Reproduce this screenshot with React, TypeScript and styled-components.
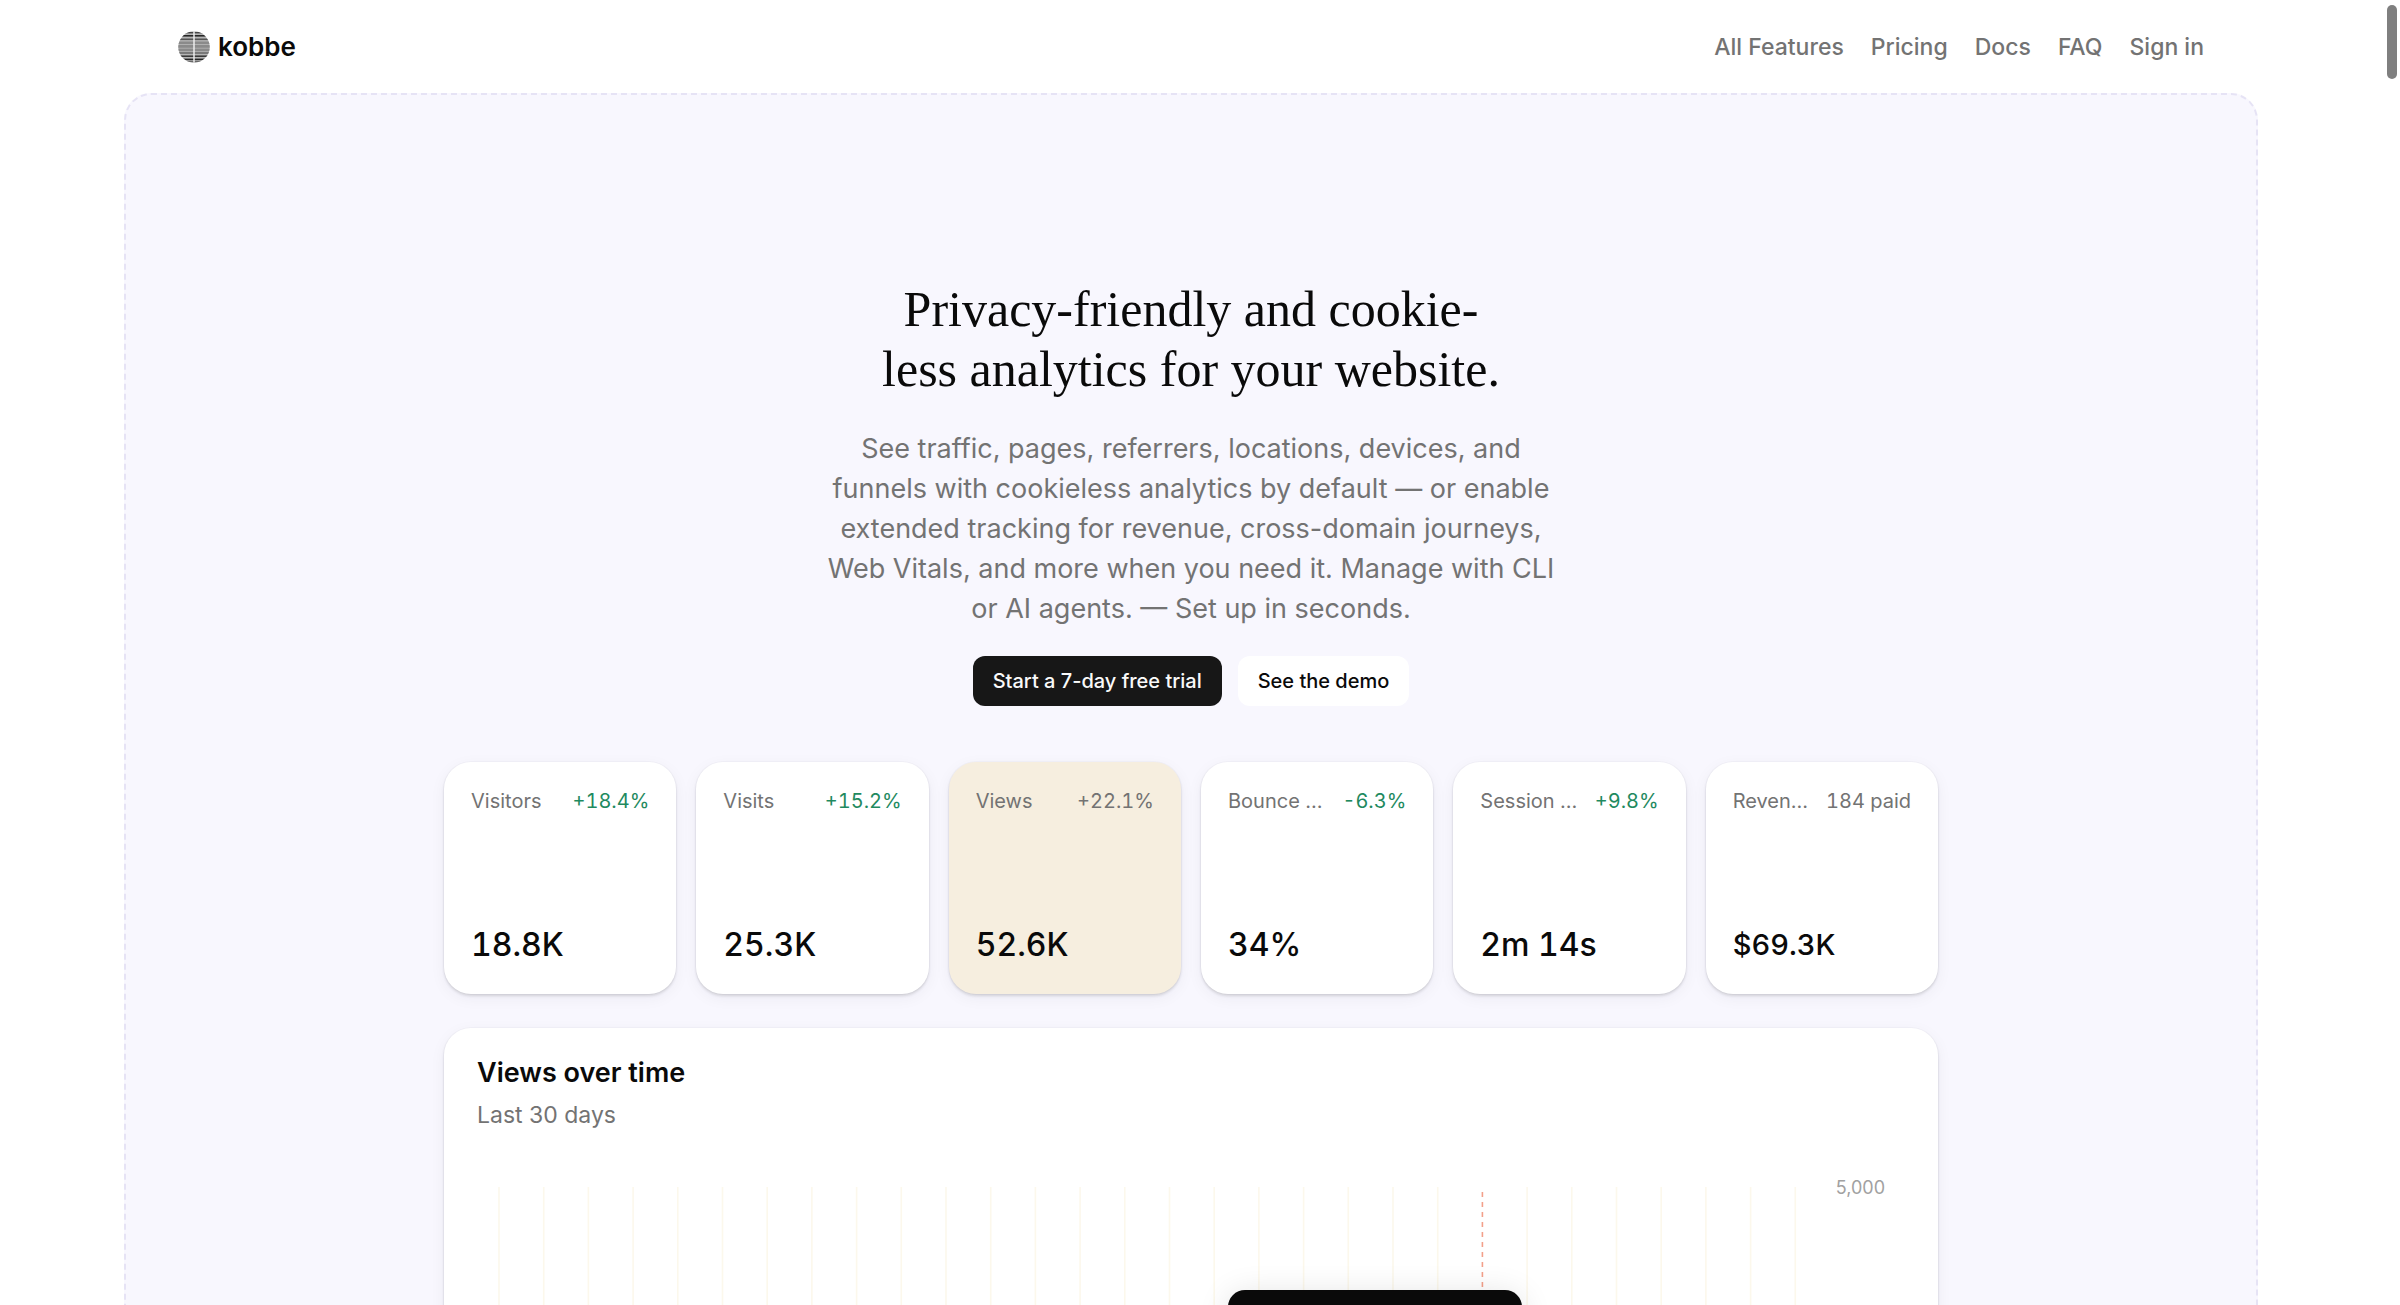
import React from "react";
import styled, { createGlobalStyle } from "styled-components";

const GlobalStyle = createGlobalStyle`
  *, *::before, *::after { box-sizing: border-box; }
  body {
    margin: 0;
    background: #fff;
    color: #0a0a0a;
    font-family: Inter, "Liberation Sans", sans-serif;
    -webkit-font-smoothing: antialiased;
  }
  h1, h2, p, dl, dt, dd { margin: 0; }
`;

const Page = styled.div`
  height: 100vh;
  overflow: hidden;
  padding-right: 18px;
`;

const ScrollThumb = styled.div`
  position: fixed;
  top: 5px;
  right: 3px;
  width: 10px;
  height: 74px;
  border-radius: 5px;
  background: #7f7f7f;
`;

const Shell = styled.div`
  width: 100%;
  max-width: 2134px;
  margin: 0 auto;
`;

const Header = styled.header`
  display: flex;
  align-items: center;
  justify-content: space-between;
  height: 93px;
  padding: 0 54px;
`;

const Brand = styled.a`
  display: flex;
  align-items: center;
  gap: 8px;
  color: #0a0a0a;
  font-size: 26px;
  font-weight: 600;
  line-height: 40px;
  text-decoration: none;
`;

const Nav = styled.nav`
  display: flex;
  gap: 27px;
`;

const NavLink = styled.a`
  color: #737373;
  font-size: 23px;
  font-weight: 500;
  line-height: 40px;
  text-decoration: none;
`;

const Panel = styled.main`
  display: flex;
  flex-direction: column;
  align-items: center;
  padding: 184px 24px 160px;
  border: 2px dashed #e6e3f5;
  border-radius: 27px;
  background: #f8f7fe;
`;

const Title = styled.h1`
  max-width: 640px;
  font-family: "Liberation Serif", serif;
  font-size: 50px;
  font-weight: 400;
  line-height: 60px;
  text-align: center;
`;

const Lead = styled.p`
  max-width: 746px;
  margin-top: 30px;
  color: #737373;
  font-size: 27px;
  line-height: 40px;
  text-align: center;
`;

const Actions = styled.div`
  display: flex;
  gap: 16px;
  margin-top: 27px;
`;

const Button = styled.button<{ $primary?: boolean }>`
  height: 50px;
  padding: 0 20px;
  border: 0;
  border-radius: 12px;
  background: ${(p) => (p.$primary ? "#171717" : "#fff")};
  color: ${(p) => (p.$primary ? "#fafafa" : "#0a0a0a")};
  font: 500 20px/30px Inter, "Liberation Sans", sans-serif;
`;

const Dashboard = styled.section`
  width: 100%;
  max-width: 1494px;
  margin-top: 56px;
`;

const Stats = styled.dl`
  display: grid;
  grid-template-columns: repeat(6, minmax(0, 1fr));
  gap: 20px;
`;

const shadow = "0 0 0 1px rgba(20, 10, 60, 0.02), 0 2px 3px rgba(0, 0, 0, 0.12), 0 4px 16px rgba(20, 10, 60, 0.05)";

const StatCard = styled.div<{ $active?: boolean }>`
  display: flex;
  flex-direction: column;
  justify-content: space-between;
  aspect-ratio: 1;
  padding: 24px 27px;
  border-radius: 27px;
  background: ${(p) => (p.$active ? "#f6eedf" : "#fff")};
  box-shadow: ${shadow};
  font-variant-numeric: tabular-nums;
`;

const StatTop = styled.dt`
  display: flex;
  justify-content: space-between;
  gap: 16px;
  color: #737373;
  font-size: 20px;
  line-height: 30px;
`;

const StatLabel = styled.span`
  overflow: hidden;
  text-overflow: ellipsis;
  white-space: nowrap;
`;

const StatChange = styled.span<{ $good?: boolean }>`
  flex: none;
  color: ${(p) => (p.$good ? "#1f8a5f" : "#737373")};
`;

const StatValue = styled.dd<{ $small?: boolean }>`
  font-size: ${(p) => (p.$small ? "29px" : "32px")};
  font-weight: 500;
  line-height: 50px;
`;

const ChartCard = styled.section`
  margin-top: 34px;
  padding: 27px 33px;
  border-radius: 27px;
  background: #fff;
  box-shadow: ${shadow};
`;

const ChartTitle = styled.h2`
  font-size: 27px;
  font-weight: 600;
  line-height: 36px;
`;

const ChartRange = styled.p`
  margin-top: 6px;
  color: #737373;
  font-size: 23px;
  line-height: 36px;
`;

const ChartBody = styled.div`
  position: relative;
  display: flex;
  justify-content: space-between;
  margin-top: 54px;
  padding: 0 20px;
`;

const Plot = styled.svg`
  flex: none;
  width: 1300px;
  height: 440px;
`;

const AxisLabel = styled.span`
  margin-top: -10px;
  color: #a1a1a1;
  font-size: 18px;
  line-height: 22px;
`;

const Tooltip = styled.div`
  position: absolute;
  top: 103px;
  left: 751px;
  width: 294px;
  height: 150px;
  border-radius: 17px;
  background: #0a0a0a;
  box-shadow: 0 4px 32px rgba(0, 0, 0, 0.12);
`;

const links = ["All Features", "Pricing", "Docs", "FAQ", "Sign in"];

const stats = [
  { label: "Visitors", change: "+18.4%", value: "18.8K", good: true },
  { label: "Visits", change: "+15.2%", value: "25.3K", good: true },
  { label: "Views", change: "+22.1%", value: "52.6K", active: true },
  { label: "Bounce rate", change: "-6.3%", value: "34%", good: true },
  { label: "Session duration", change: "+9.8%", value: "2m 14s", good: true },
  { label: "Revenue", change: "184 paid", value: "$69.3K", small: true },
];

const stripes = [
  { y: 1, h: 1.4, fill: "#444" },
  { y: 4, h: 1.6, fill: "#262626" },
  { y: 7.5, h: 1.6, fill: "#555" },
  { y: 10.5, h: 2.6, fill: "#8a8a8a" },
  { y: 14, h: 2.8, fill: "#8a8a8a" },
  { y: 17.6, h: 2.6, fill: "#8a8a8a" },
  { y: 21.2, h: 1.6, fill: "#6a6a6a" },
  { y: 24.4, h: 1.6, fill: "#3a3a3a" },
  { y: 27.6, h: 1.6, fill: "#262626" },
  { y: 30.2, h: 1.2, fill: "#555" },
];

function Logo() {
  return (
    <svg width="32" height="32" viewBox="0 0 32 32" aria-hidden="true">
      <defs>
        <clipPath id="globe"><circle cx="16" cy="16" r="15.7" /></clipPath>
      </defs>
      <g clipPath="url(#globe)">
        <rect width="32" height="32" fill="#b5b5b5" />
        {stripes.map((s) => (
          <rect key={s.y} y={s.y} width="32" height={s.h} fill={s.fill} />
        ))}
        <rect x="15.3" width="1.4" height="32" fill="#f2f2f2" />
      </g>
    </svg>
  );
}

function Chart() {
  const days = Array.from({ length: 30 }, (_, i) => 2 + i * 44.7);
  return (
    <Plot viewBox="0 0 1300 440" aria-hidden="true">
      {days.map((x, i) =>
        i === 22 ? (
          <line key={i} x1={x} x2={x} y1="5" y2="440" stroke="#f3a08a" strokeWidth="1.6" strokeDasharray="5 5" />
        ) : (
          <line key={i} x1={x} x2={x} y1="0" y2="440" stroke="#fcf8ec" strokeWidth="1.6" />
        )
      )}
    </Plot>
  );
}

export default function App() {
  return (
    <>
      <GlobalStyle />
      <Page>
        <Shell>
          <Header>
            <Brand href="#"><Logo />kobbe</Brand>
            <Nav>{links.map((l) => <NavLink key={l} href="#">{l}</NavLink>)}</Nav>
          </Header>
          <Panel>
            <Title>Privacy-friendly and cookie-<br />less analytics for your website.</Title>
            <Lead>
              See traffic, pages, referrers, locations, devices, and funnels with cookieless analytics by
              default — or enable extended tracking for revenue, cross-domain journeys, Web Vitals, and more
              when you need it. Manage with CLI or AI agents. — Set up in seconds.
            </Lead>
            <Actions>
              <Button $primary>Start a 7-day free trial</Button>
              <Button>See the demo</Button>
            </Actions>
            <Dashboard>
              <Stats>
                {stats.map((s) => (
                  <StatCard key={s.label} $active={s.active}>
                    <StatTop>
                      <StatLabel>{s.label}</StatLabel>
                      <StatChange $good={s.good}>{s.change}</StatChange>
                    </StatTop>
                    <StatValue $small={s.small}>{s.value}</StatValue>
                  </StatCard>
                ))}
              </Stats>
              <ChartCard>
                <ChartTitle>Views over time</ChartTitle>
                <ChartRange>Last 30 days</ChartRange>
                <ChartBody>
                  <Chart />
                  <AxisLabel>5,000</AxisLabel>
                  <Tooltip />
                </ChartBody>
              </ChartCard>
            </Dashboard>
          </Panel>
        </Shell>
      </Page>
      <ScrollThumb />
    </>
  );
}
